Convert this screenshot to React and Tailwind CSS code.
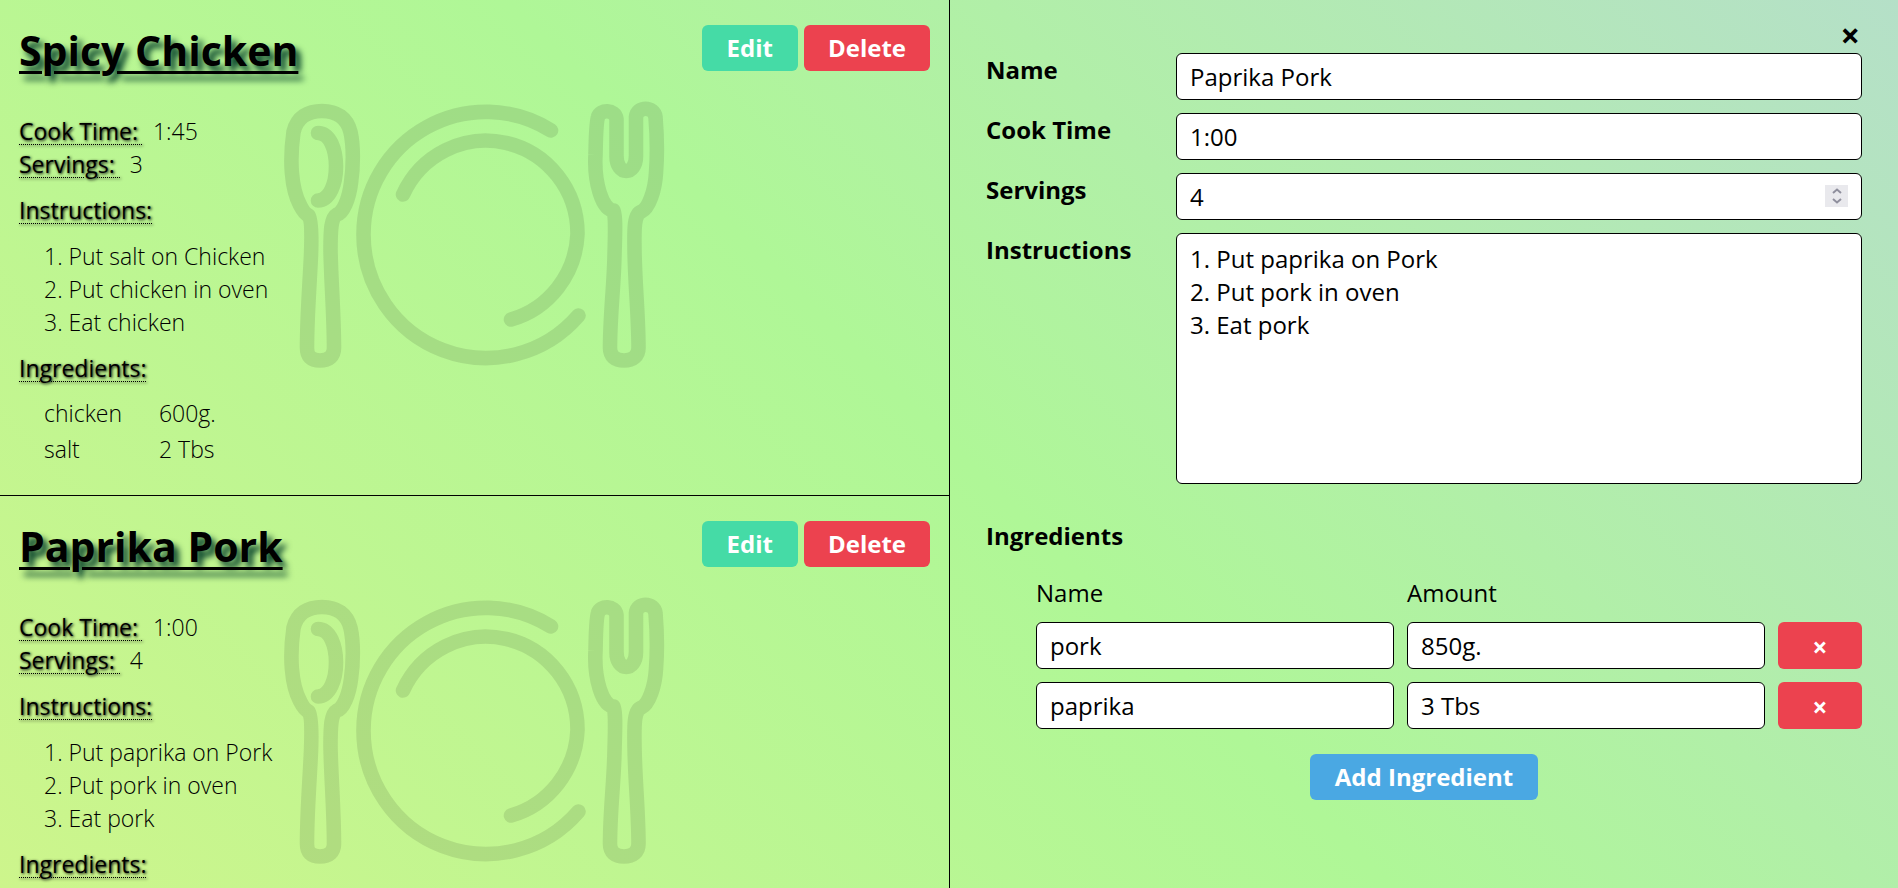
const recipes = [
  {
    id: 1,
    name: "Spicy Chicken",
    cookTime: "1:45",
    servings: 3,
    instructions: "1. Put salt on Chicken\n2. Put chicken in oven\n3. Eat chicken",
    ingredients: [
      { name: "chicken", amount: "600g." },
      { name: "salt", amount: "2 Tbs" },
    ],
  },
  {
    id: 2,
    name: "Paprika Pork",
    cookTime: "1:00",
    servings: 4,
    instructions: "1. Put paprika on Pork\n2. Put pork in oven\n3. Eat pork",
    ingredients: [
      { name: "pork", amount: "850g." },
      { name: "paprika", amount: "3 Tbs" },
    ],
  },
];

const fieldClass =
  "block w-full rounded-md border border-black bg-white px-[13px] font-normal leading-[33px] text-black";
const labelClass = "font-bold";
const headingClass =
  "font-medium underline decoration-dotted decoration-1 underline-offset-4 [text-shadow:1px_1px_3px_#000]";

function PlaceSetting() {
  return (
    <svg
      viewBox="0 0 410 290"
      className="absolute left-[270px] top-[90px] h-[290px] w-[410px] text-black/10"
      fill="none"
      stroke="currentColor"
      strokeWidth="14.6"
      strokeLinecap="round"
      strokeLinejoin="round"
      aria-hidden="true"
    >
      <path d="M52 21C38 21 27 27 23.5 42C19.500 70 21 98 30 115C33 121 35 124 38.500 125.500C42 130 41.500 152 41 165C40 190 37 225 37 258C37 266 41 270.500 50 270.500C59 270.500 64 266 64 258C64 225 61 190 60.500 160C60.500 140 61 128 67 124.500C73 123 79 109 81 93C83.500 76 83.500 55 80.500 42C77 28 67 21 52 21Z" />
      <path d="M48 43C72 43 72 110 48 110.500" />
      <path d="M281 40.500A122.500 122.500 0 0 0 93.500 144A122.500 123.500 0 0 0 308.500 225.500" />
      <path d="M133 104.500A91.500 93 0 0 1 307.500 144A91.500 93 0 0 1 241 229.500" />
      <path d="M343.500 120.500C332 120 324 92 325.500 65C326 45 326 33 328 27C330 19 345 19 346.500 29V66C346.500 86 366 86 366 66V27C367 16 384 16 385.500 27C387 45 387 70 386 83C385 100 379 118 371.500 121.500C363 124 364.500 145 364.500 160C365 195 368.500 225 368.500 258C368.500 266 363 270.500 354 270.500C345 270.500 340 266 340 258C340 225 344 195 344.500 165C345 145 346 127 343.500 120.500Z" />
    </svg>
  );
}

function Recipe({ recipe }) {
  return (
    <article className="relative border-b border-black px-[19px] pb-[26px] pt-[25px]">
      <PlaceSetting />
      <div className="relative text-[23px]">
        <header className="mb-[38px] flex h-[52px] items-start justify-between">
          <h2 className="text-[41px] font-bold leading-[50px] underline decoration-[3px] underline-offset-[5px] [text-shadow:5px_6px_6px_#003c28]">
            {recipe.name}
          </h2>
          <div className="flex gap-[6px] text-[24px] text-white">
            <button type="button" className="rounded-md bg-[#45dba6] px-[25px] py-[6px] font-bold leading-[34px]">
              Edit
            </button>
            <button type="button" className="rounded-md bg-[#ec424f] px-6 py-[6px] font-bold leading-[34px]">
              Delete
            </button>
          </div>
        </header>
        <dl className="mb-[13px] font-light">
          <div className="flex gap-[9px]">
            <dt className={headingClass}>Cook Time:&nbsp;</dt>
            <dd>{recipe.cookTime}</dd>
          </div>
          <div className="flex gap-[9px]">
            <dt className={headingClass}>Servings:&nbsp;</dt>
            <dd>{recipe.servings}</dd>
          </div>
        </dl>
        <h3 className={headingClass}>Instructions:</h3>
        <p className="my-[13px] ml-[25px] whitespace-pre-wrap font-light">{recipe.instructions}</p>
        <h3 className={headingClass}>Ingredients:</h3>
        <table className="ml-[25px] mt-3 font-light">
          <tbody>
            {recipe.ingredients.map((item) => (
              <tr key={item.name}>
                <td className="pb-[3px] pr-[37px]">{item.name}</td>
                <td className="pb-[3px]">{item.amount}</td>
              </tr>
            ))}
          </tbody>
        </table>
      </div>
    </article>
  );
}

function RecipeEdit({ recipe }) {
  return (
    <form className="px-9 pb-9 pt-[25px]" onSubmit={(e) => e.preventDefault()}>
      <div className="mb-2 flex justify-end">
        <button type="button" aria-label="Close" className="px-[2px] text-[34px] font-bold leading-[20px]">
          ×
        </button>
      </div>
      <div className="grid grid-cols-[150px_1fr] gap-x-10 gap-y-[13px]">
        <label htmlFor="name" className={labelClass}>Name</label>
        <input id="name" type="text" defaultValue={recipe.name} className={`${fieldClass} py-[6px]`} />
        <label htmlFor="cookTime" className={labelClass}>Cook Time</label>
        <input id="cookTime" type="text" defaultValue={recipe.cookTime} className={`${fieldClass} py-[6px]`} />
        <label htmlFor="servings" className={labelClass}>Servings</label>
        <div className="relative">
          <input
            id="servings"
            type="number"
            defaultValue={recipe.servings}
            className={`${fieldClass} appearance-none py-[6px] [appearance:textfield]`}
          />
          <span className="pointer-events-none absolute right-[14px] top-3 flex h-[22px] w-[23px] items-center justify-center bg-[#e9e9ed]">
            <svg viewBox="0 0 10 16" className="h-4 w-[10px] text-[#8f8f9d]" fill="none" stroke="currentColor" strokeWidth="2" aria-hidden="true">
              <path d="M1 5L5 1.500L9 5M1 11L5 14.500L9 11" />
            </svg>
          </span>
        </div>
        <label htmlFor="instructions" className={labelClass}>Instructions</label>
        <textarea
          id="instructions"
          defaultValue={recipe.instructions}
          className={`${fieldClass} h-[251px] resize-none py-2`}
        />
      </div>
      <h3 className="mt-[35px] font-bold">Ingredients</h3>
      <div className="ml-[50px] mt-6 grid grid-cols-[1fr_1fr_auto] gap-x-[13px] gap-y-[13px]">
        <div>Name</div>
        <div>Amount</div>
        <div />
        {recipe.ingredients.map((item) => (
          <div key={item.name} className="contents">
            <input type="text" aria-label="Ingredient name" defaultValue={item.name} className={`${fieldClass} min-w-0 py-[6px]`} />
            <input type="text" aria-label="Ingredient amount" defaultValue={item.amount} className={`${fieldClass} min-w-0 py-[6px]`} />
            <button type="button" aria-label="Remove ingredient" className="w-[84px] rounded-md bg-[#ec424f] pt-1 text-[26px] font-bold text-white">
              ×
            </button>
          </div>
        ))}
      </div>
      <div className="mt-[25px] flex justify-center">
        <button type="button" className="rounded-md bg-[#4aa8e3] px-[25px] py-[6px] font-bold leading-[34px] text-white">
          Add Ingredient
        </button>
      </div>
    </form>
  );
}

export default function App() {
  return (
    <main className="grid h-screen grid-cols-2 bg-[linear-gradient(45deg,#cdf58c,#aff797,#b5e0c8)] font-['Open_Sans',sans-serif] text-[24px] leading-[33px] text-black">
      <section className="overflow-y-auto [scrollbar-width:none]">
        {recipes.map((recipe) => (
          <Recipe key={recipe.id} recipe={recipe} />
        ))}
      </section>
      <section className="overflow-y-auto border-l border-black [scrollbar-width:none]">
        <RecipeEdit recipe={recipes[1]} />
      </section>
    </main>
  );
}
